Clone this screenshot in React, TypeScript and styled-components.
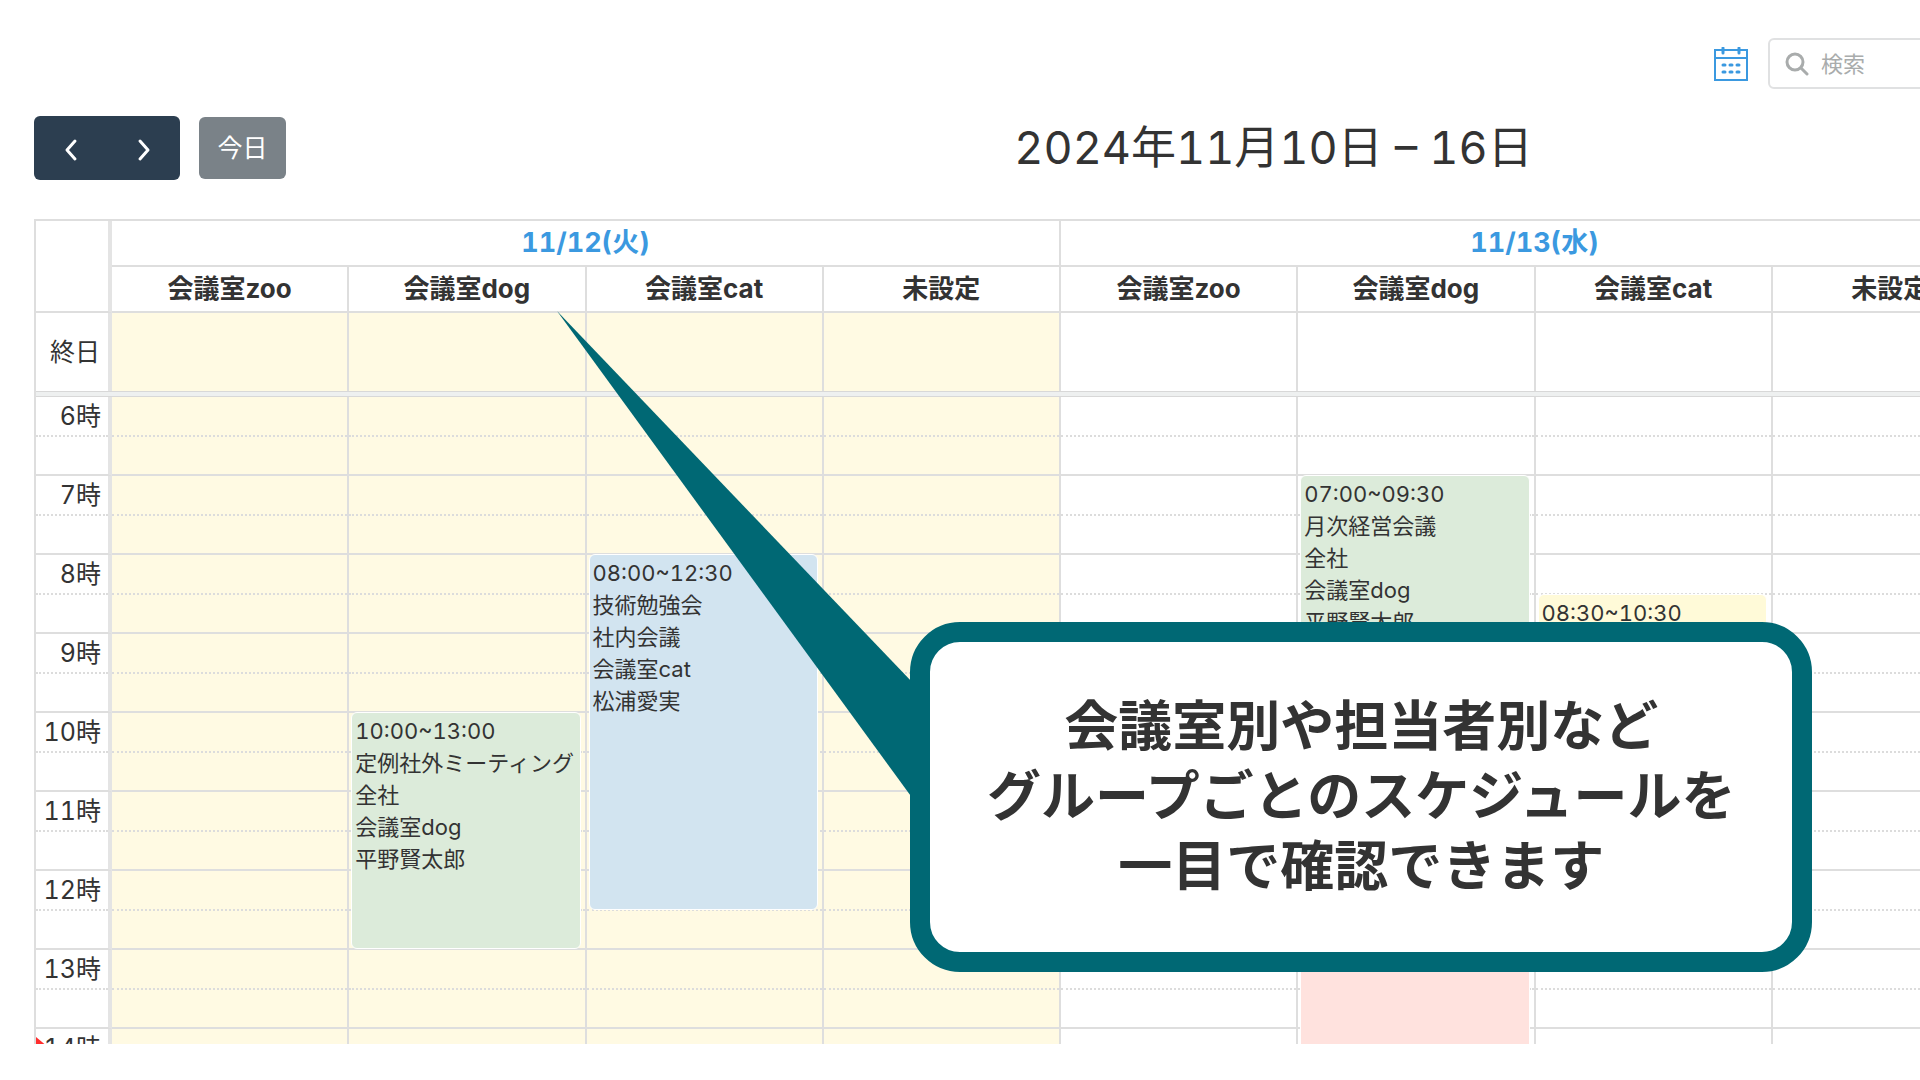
import React from "react";
import styled, { createGlobalStyle } from "styled-components";

const SLOT = 79;
const LINE = "#dedede";

const GlobalStyle = createGlobalStyle`
  *, *::before, *::after { box-sizing: border-box; }
  body {
    margin: 0;
    background: #ffffff;
    color: #333333;
    font-family: Inter, "Noto Sans CJK JP", sans-serif;
    font-variant-numeric: tabular-nums;
    overflow: hidden;
  }
  button, input { font: inherit; }
`;

const Page = styled.div`
  display: flex;
  flex-direction: column;
  height: 100vh;
  padding: 38px 0 36px 34px;
  overflow: hidden;
`;

const TopBar = styled.header`
  display: flex;
  justify-content: flex-end;
  align-items: center;
  gap: 20px;
  margin-right: -90px;
`;

const IconButton = styled.button`
  display: flex;
  padding: 0;
  border: 0;
  background: none;
  color: #3b99e0;
`;

const SearchBox = styled.label`
  display: flex;
  align-items: center;
  gap: 12px;
  width: 242px;
  height: 51px;
  padding: 0 15px;
  border: 2px solid #e0e1e2;
  border-radius: 6px;
  color: #a9acac;
`;

const SearchInput = styled.input`
  flex: 1;
  min-width: 0;
  padding: 0;
  border: 0;
  outline: 0;
  background: none;
  font-size: 22px;
  line-height: 32px;
  &::placeholder { color: #a9acac; opacity: 1; }
`;

const Toolbar = styled.div`
  display: grid;
  grid-template-columns: 253px 1fr;
  align-items: center;
  margin: 26px -340px 38px 0;
  height: 66px;
`;

const NavGroup = styled.div`
  display: flex;
  align-items: center;
  gap: 19px;
`;

const ArrowPair = styled.div`
  display: flex;
  height: 64px;
  border-radius: 6px;
  overflow: hidden;
  background: #2c3e50;
`;

const ArrowButton = styled.button`
  display: flex;
  align-items: center;
  justify-content: center;
  width: 73px;
  padding: 4px 0 0;
  border: 0;
  background: none;
  color: #ffffff;
`;

const TodayButton = styled.button`
  width: 87px;
  height: 62px;
  padding: 0 0 4px;
  border: 0;
  border-radius: 6px;
  background: #7a8288;
  color: #ffffff;
  font-size: 25px;
`;

const Title = styled.h1`
  margin: 0;
  text-align: center;
  font-size: 45px;
  line-height: 60px;
  font-weight: 400;
`;

const Board = styled.main`
  flex: 1;
  min-height: 0;
  margin-right: -90px;
  overflow: hidden;
`;

const Calendar = styled.table`
  width: 100%;
  table-layout: fixed;
  border-collapse: separate;
  border-spacing: 0;
  border-left: 2px solid ${LINE};
  border-top: 2px solid ${LINE};
`;

const AxisCol = styled.col`
  width: 76px;
`;

const HeadCell = styled.th<{ $date?: boolean }>`
  height: 46px;
  padding: 0;
  border-right: 2px solid ${LINE};
  border-bottom: 2px solid ${LINE};
  color: ${(p) => (p.$date ? "#3b99e0" : "#333333")};
  font-size: ${(p) => (p.$date ? 27 : 26)}px;
  line-height: 36px;
  font-weight: 700;
`;

const CornerCell = styled.td`
  border-right: 4px solid #e4e4e4;
  border-bottom: 2px solid ${LINE};
`;

const AllDayLabel = styled.th`
  height: 78px;
  padding: 0 8px 4px 0;
  border-right: 4px solid #e4e4e4;
  text-align: right;
  font-size: 25px;
  font-weight: 400;
`;

const AllDayCell = styled.td<{ $today: boolean }>`
  border-right: 2px solid ${LINE};
  background: ${(p) => (p.$today ? "#fffae3" : "#ffffff")};
`;

const Divider = styled.td`
  height: 6px;
  padding: 0;
  border-top: 1px solid #d8d8d8;
  border-bottom: 1px solid #d8d8d8;
  background: #eef0f0;
`;

const HourLabel = styled.th`
  position: relative;
  height: ${SLOT}px;
  padding: 0;
  border-right: 4px solid #e4e4e4;
  border-bottom: 2px solid ${LINE};
  vertical-align: top;
  text-align: right;
  font-size: 25px;
  line-height: 38px;
  font-weight: 400;
`;

const HalfHour = styled.div`
  height: 40px;
  padding-right: 7px;
  border-bottom: 2px dotted #dcdcdc;
`;

const HourCell = styled.td<{ $today: boolean }>`
  position: relative;
  padding: 0;
  border-right: 2px solid ${LINE};
  border-bottom: 2px solid ${LINE};
  background: ${(p) => (p.$today ? "#fffae3" : "#ffffff")};
  vertical-align: top;
`;

const NowArrow = styled.span`
  position: absolute;
  top: 8px;
  left: 0;
  border-style: solid;
  border-width: 10px 0 10px 12px;
  border-color: transparent transparent transparent #ff2d2d;
`;

const EventCard = styled.article<{ $color: string }>`
  position: absolute;
  z-index: 1;
  left: 2px;
  right: 4px;
  margin-top: -1px;
  padding: 2px 3px;
  border: 1px solid #ffffff;
  border-radius: 6px;
  background: ${(p) => p.$color};
  font-size: 22px;
  line-height: 32px;
  white-space: nowrap;
  overflow: hidden;
`;

const Callout = styled.aside`
  position: absolute;
  z-index: 3;
  left: 910px;
  top: 622px;
  padding: 46px 53px 54px 57px;
  padding: 46px 57px 54px;
  border: 20px solid #006874;
  border-radius: 50px;
  background: #ffffff;
`;

const CalloutText = styled.p`
  margin: 0;
  text-align: center;
  white-space: nowrap;
  font-family: "Noto Sans CJK JP", sans-serif;
  font-size: 54px;
  line-height: 70px;
  font-weight: 700;
`;

const CalloutTail = styled.svg`
  position: absolute;
  z-index: 2;
  left: 557px;
  top: 311px;
`;

const rooms = ["会議室zoo", "会議室dog", "会議室cat", "未設定"];
const days = [
  { label: "11/12(火)", today: true },
  { label: "11/13(水)", today: false },
];
const hours = [6, 7, 8, 9, 10, 11, 12, 13, 14];

type Booking = { day: number; room: number; start: number; end: number; color: string; lines: string[] };

const bookings: Booking[] = [
  { day: 0, room: 1, start: 10, end: 13, color: "#dcebda", lines: ["10:00~13:00", "定例社外ミーティング", "全社", "会議室dog", "平野賢太郎"] },
  { day: 0, room: 2, start: 8, end: 12.5, color: "#d2e4f0", lines: ["08:00~12:30", "技術勉強会", "社内会議", "会議室cat", "松浦愛実"] },
  { day: 1, room: 1, start: 7, end: 9.5, color: "#dcebda", lines: ["07:00~09:30", "月次経営会議", "全社", "会議室dog", "平野賢太郎"] },
  { day: 1, room: 2, start: 8.5, end: 10.5, color: "#fffad8", lines: ["08:30~10:30"] },
  { day: 1, room: 1, start: 12, end: 16, color: "#ffe2de", lines: [] },
];

const columns = days.flatMap((d, day) => rooms.map((name, room) => ({ day, room, name, today: d.today })));

function CalendarIcon() {
  return (
    <svg width="34" height="34" viewBox="0 0 34 34" fill="none" stroke="currentColor" strokeWidth="2">
      <path d="M1 3h32v30H1zM1 11h32" />
      <path d="M9 1v5M25 1v5M9 18h2M16 18h2M23 18h2M9 25h2M16 25h2M23 25h2" strokeWidth="3" strokeLinecap="round" />
    </svg>
  );
}

function SearchIcon() {
  return (
    <svg width="24" height="24" viewBox="0 0 24 24" fill="none" stroke="currentColor" strokeWidth="3">
      <circle cx="10" cy="10" r="8" />
      <path d="M16 16l6 6" strokeLinecap="round" />
    </svg>
  );
}

function Chevron({ path }: { path: string }) {
  return (
    <svg width="16" height="24" viewBox="0 0 16 24" fill="none" stroke="currentColor" strokeWidth="3" strokeLinecap="round" strokeLinejoin="round">
      <path d={path} />
    </svg>
  );
}

export default function App() {
  return (
    <Page>
      <GlobalStyle />
      <TopBar>
        <IconButton aria-label="カレンダー"><CalendarIcon /></IconButton>
        <SearchBox>
          <SearchIcon />
          <SearchInput type="search" placeholder="検索" aria-label="検索" />
        </SearchBox>
      </TopBar>
      <Toolbar>
        <NavGroup>
          <ArrowPair>
            <ArrowButton aria-label="前へ"><Chevron path="M12 3L4 12l8 9" /></ArrowButton>
            <ArrowButton aria-label="次へ"><Chevron path="M4 3l8 9-8 9" /></ArrowButton>
          </ArrowPair>
          <TodayButton>今日</TodayButton>
        </NavGroup>
        <Title>2024年11月10日 – 16日</Title>
      </Toolbar>
      <Board>
        <Calendar>
          <colgroup>
            <AxisCol />
            {columns.map((c) => <col key={`${c.day}-${c.room}`} />)}
          </colgroup>
          <thead>
            <tr>
              <CornerCell rowSpan={2} />
              {days.map((d) => <HeadCell key={d.label} colSpan={4} $date>{d.label}</HeadCell>)}
            </tr>
            <tr>
              {columns.map((c) => <HeadCell key={`${c.day}-${c.room}`}>{c.name}</HeadCell>)}
            </tr>
          </thead>
          <tbody>
            <tr>
              <AllDayLabel>終日</AllDayLabel>
              {columns.map((c) => <AllDayCell key={`${c.day}-${c.room}`} $today={c.today} />)}
            </tr>
            <tr>
              <Divider colSpan={9} />
            </tr>
            {hours.map((hour) => (
              <tr key={hour}>
                <HourLabel>
                  {hour === 14 && <NowArrow />}
                  <HalfHour>{hour}時</HalfHour>
                </HourLabel>
                {columns.map((c) => (
                  <HourCell key={`${c.day}-${c.room}`} $today={c.today}>
                    <HalfHour />
                    {bookings
                      .filter((b) => b.day === c.day && b.room === c.room && Math.floor(b.start) === hour)
                      .map((b) => (
                        <EventCard
                          key={b.start}
                          $color={b.color}
                          style={{ top: (b.start - hour) * SLOT, height: (b.end - b.start) * SLOT }}
                        >
                          {b.lines.map((line) => <div key={line}>{line}</div>)}
                        </EventCard>
                      ))}
                  </HourCell>
                ))}
              </tr>
            ))}
          </tbody>
        </Calendar>
      </Board>
      <CalloutTail width="356" height="486" viewBox="0 0 356 486">
        <path d="M0 0L356 372V488z" fill="#006874" />
      </CalloutTail>
      <Callout>
        <CalloutText>会議室別や担当者別など<br />グループごとのスケジュールを<br />一目で確認できます</CalloutText>
      </Callout>
    </Page>
  );
}
